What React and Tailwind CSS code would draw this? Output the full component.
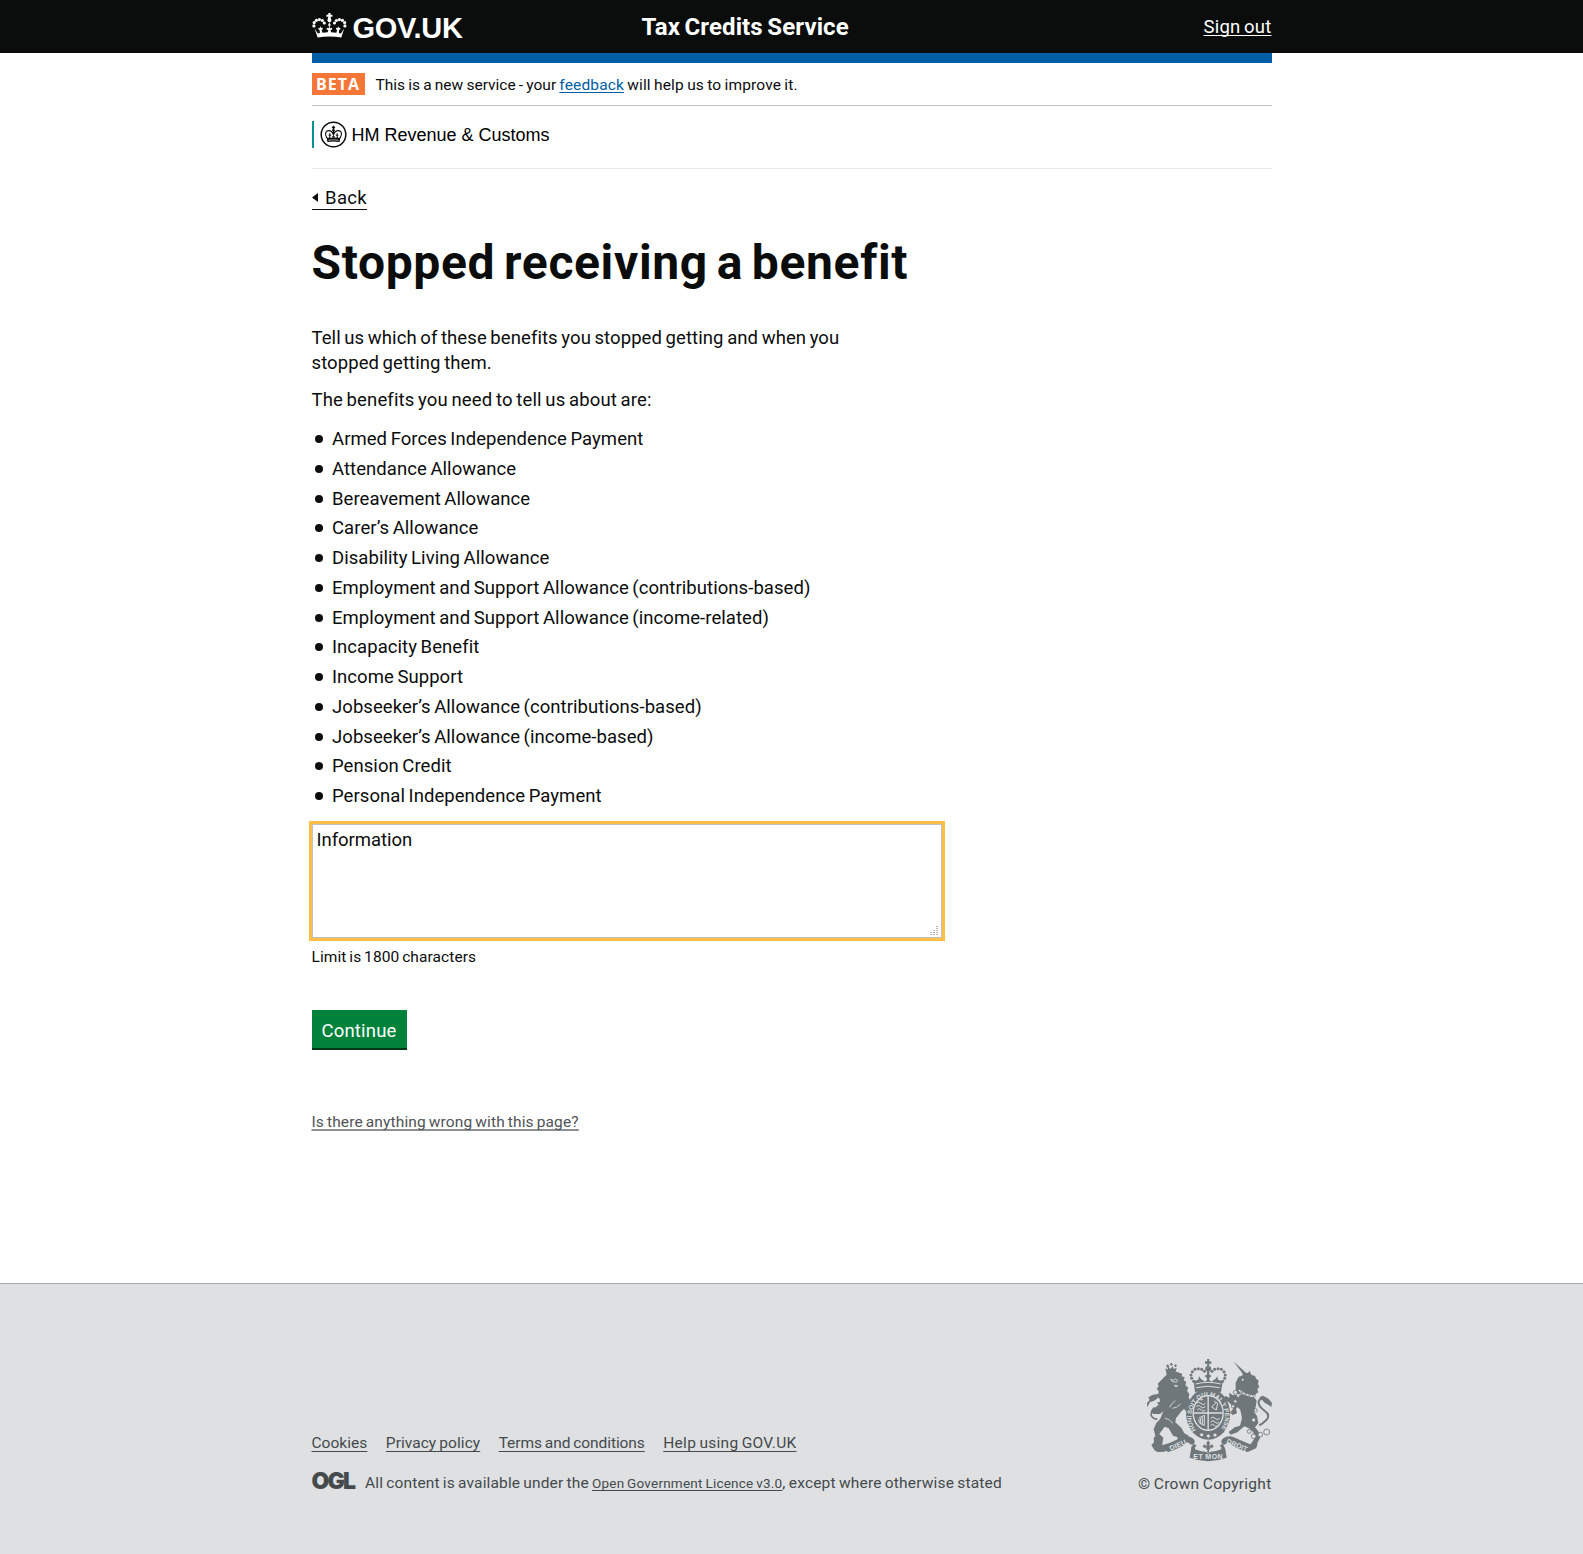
const benefits = [
  "Armed Forces Independence Payment",
  "Attendance Allowance",
  "Bereavement Allowance",
  "Carer’s Allowance",
  "Disability Living Allowance",
  "Employment and Support Allowance (contributions-based)",
  "Employment and Support Allowance (income-related)",
  "Incapacity Benefit",
  "Income Support",
  "Jobseeker’s Allowance (contributions-based)",
  "Jobseeker’s Allowance (income-based)",
  "Pension Credit",
  "Personal Independence Payment",
];

const linkBase = "underline decoration-1 [text-decoration-skip-ink:none]";

function GovCrown() {
  const pearls = [[1.9, 13.9], [2.2, 10.6], [4.4, 8.3], [7.4, 7.6], [10.4, 8.5], [12.3, 11]];
  return (
    <svg viewBox="0 0 35 27" className="h-[27px] w-[35px]" fill="#fff">
      {pearls.map(([x, y]) => (
        <g key={`${x}-${y}`}>
          <circle cx={x} cy={y} r="1.6" />
          <circle cx={34.8 - x} cy={y} r="1.6" />
        </g>
      ))}
      <path d="M16.3 1h2.2v1.700h1.900v2.100h-1.900l.6 2.400a2 2 0 1 1-3.400 0l.6-2.400h-1.900V2.700h1.900z" />
      <path d="M17.400 10.500l1.300 2.500-1.300 2.300-1.300-2.300z" />
      <path d="M2.600 16.400l3.300 5.100 2-.6-.3-3.200-1.200-.2.200-1.800 1.300.3.500-1.800.9 1.800 1.300-.3.200 1.800-1.300.2 1 3 5.200-.5.6-2.200-1.700-.6.300-1.700 1.600.6.900-1.600.9 1.600 1.600-.6.300 1.700-1.700.6.600 2.200 5.200.5 1-3-1.300-.2.200-1.800 1.300.3.900-1.800.5 1.800 1.300-.3.200 1.800-1.200.2-.3 3.200 2 .6 3.300-5.100-2.900 9.200q-11.800-2.300-23.700 0z" />
    </svg>
  );
}

function HmrcBadge() {
  return (
    <svg viewBox="0 0 27 27" className="h-[27px] w-[27px]">
      <circle cx="13.500" cy="13.500" r="12.300" fill="#fff" stroke="#0b0c0c" strokeWidth="1.500" />
      <g fill="none" stroke="#0b0c0c">
        <path d="M6.800 17C4.500 12.800 5.500 9.800 8.300 9.600c2.700-.1 4.500 1.500 5.200 4.200.7-2.700 2.500-4.300 5.200-4.200 2.800.2 3.800 3.200 1.500 7.400" strokeWidth="1.100" />
        <path d="M13.500 4.800v8.500M11.900 6.500h3.200" strokeWidth="1.300" />
        <path d="M9.800 17.200v-5M17.200 17.200v-5M8.600 14.200h2.600M15.800 14.200h2.600M12.200 15.700h2.600" strokeWidth="1" />
      </g>
      <circle cx="13.500" cy="9.300" r="1.200" fill="#0b0c0c" />
      <path d="M6.500 16q1.300 1.500 3 .2 2 1.300 4-.2 2 1.500 4 .2 1.700 1.300 3-.2l-.9 5q-6.100-1.200-12.200 0z" fill="#0b0c0c" />
      <path d="M8.300 19.300q5.200-1.100 10.400 0" stroke="#fff" strokeWidth=".6" fill="none" />
    </svg>
  );
}

function RoyalArms() {
  const light = "#dee0e2";
  const arch = [[191, 124], [185, 115], [183, 105], [187, 95], [195, 88], [205, 86], [215, 88], [223, 94]];
  return (
    <svg viewBox="51 54 375 312" className="-mt-px h-[104px] w-[125px] overflow-visible" fill="#6f777b">
      {/* lion */}
      <path d="M106 84l6 5 3-9 7 7 5-8 5 8 8-4-3 12-5 9-22 1zM113 84l-5-6 5-5 5 5zM124 78l-5-5 5-5 5 5zM136 82l-4-5 5-5 4 5z" />
      <path d="M102 112l10-9 28-8 17 7-2 7 9 3-3 8 8 7-3 8 9 9-4 8 7 10-2 10 5 11-4 8 8 6 5-4-2 13 5 5-10 7-7 11-8-3 2-10-8-9-9 8-15 20-2 12 18 16 9 17 11 6 7 12-11 6-28-3 1-9-14-5-13-22-12-5-16 22 12 11-4 25 14 9-6 8-22 1-9-6-9-15 8-8-1-12 5-8-5-20 8-18 11-11 10-24-10 8-20 0-8-8 8-12 10 2 8-8-8-8 10-3-1-9-9-6 5-8 1-9-6-6 6-8-3-8z" />
      <path d="M82 238c-24-4-23-21-7-32 19-13 27-24 19-37-7-8-21-3-29 9" fill="none" stroke="#6f777b" strokeWidth="5" />
      <path d="M52 202l-1-13 8-9-4-8 14-8 19-2-7 14-10 7-11 3z" />
      <path d="M122 118l7 3 7-4 7 4-4 6-5-2-5 2zM133 136l10 1-5 4zM136 182q-13 8-17 20M127 205q14 0 25-14M104 234q15 3 25 16" fill="none" stroke={light} strokeWidth="2.500" />
      {/* unicorn */}
      <path d="M310 64l41 37-8 6z" />
      <path d="M317 128l9-18 10-3 5-9 13 1 4-7 6 12 11 4 4 9 7 4-2 10 4 10-6 6 3 10-8 5-1 9-35-4-9-7-8 4-7-12z" />
      <path d="M298 158l10 7 12 0 5 8 5-10 43 9 7 10-3 19-5 15 9 12 4 21-10 13 11 13 4 20-7 12-3 15-12 3-6-12 10-15-2-22-13-11-14-6-21 18-20 7-6-8 18-14 16-5 6-22-5-25-8-9-5 6 3 13-13 5-8-8 8-8 2-9-15-15-7-1-8-11 8-5 10 6z" />
      <circle cx="338" cy="119" r="3" fill={light} />
      <path d="M388 256c19-12 34-24 23-37-13-12-28-20-25-34 3-12 19-16 28-3" fill="none" stroke="#6f777b" strokeWidth="6" />
      <path d="M388 172l11-5 17 10 10 12-2 12-9-7-10-5z" />
      <path d="M327 150q19 17 48 19" fill="none" stroke={light} strokeWidth="6" />
      <path d="M328 148l10 11 2-9 8 14 4-8 7 13 5-8 8 10" fill="none" stroke="#6f777b" strokeWidth="2.500" />
      <g fill={light} stroke="#6f777b" strokeWidth="2.500">
        <circle cx="316" cy="157" r="6" /><circle cx="316" cy="184" r="5" /><circle cx="309" cy="199" r="5" />
        <circle cx="377" cy="211" r="5" /><circle cx="371" cy="240" r="6" /><circle cx="358" cy="274" r="6" />
        <circle cx="371" cy="289" r="7" /><circle cx="391" cy="284" r="7" /><circle cx="410" cy="276" r="9" />
      </g>
      {/* ribbon */}
      <path d="M88 318q35-9 65-25 20-9 34 1 11 8 5 17-6 7-15-1l-5-4q-15 17-57 30l-25-11z" />
      <path d="M379 318q-32-9-64-25-20-9-34 1-11 8-5 17 6 7 15-1l5-4q14 17 57 30l25-11z" />
      <path d="M183 329q-1-10 9-17l8 4q-8 6-5 12 39 17 79 0 2-6-5-12l8-4q8 7 9 16l4 25q-56 21-111 0z" />
      {/* crown */}
      <path d="M231 57h7l-1 7h7v7h-7l1 7h-7l1-7h-7v-7h7zM228 79h13l3 7-3 7h-13l-3-7zM231 93h7v37h-7zM224 108l10-7 11 7-11 9z" />
      {arch.map(([x, y]) => (
        <g key={x * 1000 + y}>
          <circle cx={x} cy={y} r="4.500" />
          <circle cx={469 - x} cy={y} r="4.500" />
        </g>
      ))}
      <path d="M191 124l14-5 2-10 6 8 12 8 9-8 10 8 12-8 6-8 2 10 14 5-5 33q-39-11-78 0z" />
      <path d="M197 132q37-10 75 0M199 143q35-9 70 0" fill="none" stroke={light} strokeWidth="3" />
      {/* garter and shield */}
      <ellipse cx="234.500" cy="222" rx="66" ry="77" />
      <ellipse cx="234.500" cy="219" rx="47" ry="54" fill={light} />
      <ellipse cx="234.500" cy="219" rx="43" ry="50" />
      <path d="M234.500 169v102M192 219h85" stroke={light} strokeWidth="4" />
      <path d="M200 190q7-8 13 0t13 0M199 200q7-8 13 0t14 0M202 210q7-8 12 0t12 0M242 235q7-8 13 0t14 0M242 246q7-8 13 0t12 0M242 256q6-7 11 0t8 0M213 181l6-3M252 183l11 7-4 20-14-9 15-15M206 234l17-8v30M206 238q1 15 17 18M211 234v18M217 231v22" fill="none" stroke={light} strokeWidth="3" />
      <defs>
        <path id="garter" d="M198 270A50 60 0 1 1 274 266" />
      </defs>
      <text fill={light} fontFamily="Liberation Sans" fontWeight="700" fontSize="19">
        <textPath href="#garter" textLength="256" lengthAdjust="spacingAndGlyphs">HONI SOIT QUI MAL Y PENSE</textPath>
      </text>
      <path d="M209 284l6-5 6 5-6 6zM229 288l6-5 6 5-6 6zM249 285l6-5 6 5-6 6z" fill={light} />
      <path d="M234.500 299l6 10-2 8 8-5 5 7-5 6-6-2 1 4-4 3 1 7-4 3-4-3 1-7-4-3 1-4-6 2-5-6 5-7 8 5-2-8z" stroke={light} strokeWidth="1.500" />
      <g fill={light} fontFamily="Liberation Sans" fontWeight="700" fontSize="21">
        <text x="0" y="0" textLength="52" transform="translate(122 332) rotate(-23)">DIEU</text>
        <text x="190" y="357" textLength="88">ET MON</text>
        <text x="0" y="0" textLength="66" transform="translate(288 309) rotate(23)">DROIT</text>
      </g>
    </svg>
  );
}

function Header() {
  return (
    <header className="h-[53px] bg-[#0b0c0c] text-white">
      <div className="mx-auto flex h-full w-[960px] items-start">
        <div className="flex w-[330px] pt-3">
          <GovCrown />
          <span className="ml-[6px] font-['Liberation_Sans',sans-serif] text-[29px] leading-[32px] font-bold tracking-[-0.25px]">GOV.UK</span>
        </div>
        <span className="pt-[11px] text-[24px] leading-[32px] font-bold tracking-[0.1px] [word-spacing:-1.5px]">Tax Credits Service</span>
        <a href="#" className={`${linkBase} ml-auto pt-[15px] text-[18.5px] leading-[25px] tracking-[0.2px] [word-spacing:-1.1px] underline-offset-[2px]`}>Sign out</a>
      </div>
    </header>
  );
}

function Footer() {
  const link = `${linkBase} underline-offset-[3px]`;
  return (
    <footer className="mt-[151px] h-[271px] border-t border-[#a1acb2] bg-[#dee0e2] text-[15.5px] leading-[20px] text-[#454a4c] [word-spacing:-0.8px]">
      <div className="mx-auto flex w-[960px] items-end justify-between pt-[75px]">
        <div className="pb-px">
          <nav className="flex gap-[18.5px]">
            <a href="#" className={`${link} tracking-[0.03px]`}>Cookies</a>
            <a href="#" className={`${link} tracking-[0.05px]`}>Privacy policy</a>
            <a href="#" className={`${link} tracking-[-0.08px]`}>Terms and conditions</a>
            <a href="#" className={`${link} tracking-[0.28px]`}>Help using GOV.UK</a>
          </nav>
          <div className="mt-5 flex">
            <span className="w-[53.500px] font-[Inter,sans-serif] text-[23px] leading-[16px] font-black tracking-[-1.800px]">OGL</span>
            <p className="whitespace-nowrap">
              <span className="tracking-[0.14px]">All content is available under the </span>
              <a href="#" className={`${linkBase} text-[13.5px] tracking-[0.22px] underline-offset-[2px]`}>Open Government Licence v3.0</a>
              <span className="tracking-[0.18px]">, except where otherwise stated</span>
            </p>
          </div>
        </div>
        <div className="flex flex-col items-end">
          <RoyalArms />
          <span className="mt-3 tracking-[0.28px]">© Crown Copyright</span>
        </div>
      </div>
    </footer>
  );
}

export default function App() {
  return (
    <div className="min-h-screen bg-white font-[Roboto,sans-serif] text-[#0b0c0c]">
      <Header />
      <main className="mx-auto w-[960px] [word-spacing:-1.1px]">
        <div className="h-[10px] bg-[#005ea5]" />
        <div className="flex h-[43px] items-start border-b border-[#bfc1c3] pt-[10px]">
          <strong className="h-[22px] w-[53px] bg-[#f47738] text-center font-['Open_Sans',sans-serif] text-[16px] leading-[23px] font-bold tracking-[1px] text-white">BETA</strong>
          <p className="ml-[11px] text-[15.5px] leading-[24px] tracking-[0.14px] [word-spacing:-0.7px]">
            <span className="tracking-[0.01px]">This is a new service - your </span>
            <a href="#" className={`${linkBase} text-[#005ea5] underline-offset-[2px]`}>feedback</a>{" "}
            will help us to improve it.
          </p>
        </div>
        <div className="flex h-[63px] items-start border-b border-[#ebebeb] pt-[15px]">
          <div className="flex h-[27px] items-center border-l-2 border-[#009390] pl-[6px]">
            <HmrcBadge />
            <span className="ml-[5px] font-['Liberation_Sans',sans-serif] text-[18px] leading-[27px] pt-[2px] text-black [word-spacing:0]">HM Revenue &amp; Customs</span>
          </div>
        </div>

        <a href="#" className="mt-[17px] flex h-[24px] w-[55.500px] items-start border-b border-[#0b0c0c] text-[18.5px] leading-[24px]">
          <svg viewBox="0 0 6 9" className="mt-[7px] h-[9px] w-[6px] shrink-0" fill="#0b0c0c"><path d="M0 4.500L6 0v9z" /></svg>
          <span className="ml-[7.500px] tracking-[0.35px]">Back</span>
        </a>

        <h1 className="mt-[28px] text-[48px] leading-[50px] font-bold tracking-[0.65px] [word-spacing:-3.800px]">Stopped receiving a benefit</h1>
        <p className="mt-[38px] text-[18.5px] leading-[25px] tracking-[0.08px]">
          Tell us which of these benefits you stopped getting and when you<br />stopped getting them.
        </p>
        <p className="mt-3 text-[18.5px] leading-[25px] tracking-[0.14px]">The benefits you need to tell us about are:</p>

        <ul className="mt-[14px] text-[18.5px] leading-[25px] tracking-[0.06px]">
          {benefits.map((benefit) => (
            <li key={benefit} className="flex h-[29.750px] items-start">
              <span className="mt-[8px] mr-[9.500px] ml-[3px] size-[8px] rounded-full bg-[#0b0c0c]" />
              {benefit}
            </li>
          ))}
        </ul>

        <div className="relative mt-[10.250px] h-[114px] w-[630px]">
          <textarea
            defaultValue="Information"
            className="block h-full w-full resize-none border border-[#bfc1c3] bg-white px-[4px] py-[3px] text-[18.5px] leading-[25px] tracking-[-0.05px] outline-3 outline-[#ffbf47]"
          />
          <svg viewBox="0 0 8 9" className="absolute right-[3.500px] bottom-[3px] h-[9px] w-[8px]" stroke="#b4b4b4" strokeWidth="2" strokeDasharray="1 1">
            <path d="M1 9V6M4 9V3M7 9V0" />
          </svg>
        </div>
        <p className="mt-[9px] text-[15.5px] leading-[20px] tracking-[0.09px]">Limit is 1800 characters</p>
        <button type="button" className="mt-[43px] block h-[40px] w-[95px] border-b-2 border-[#003618] bg-[#00823b] pt-[4px] text-[18.5px] leading-[34px] tracking-[0.2px] text-white">
          Continue
        </button>
        <a href="#" className="mt-[62px] block w-fit text-[15.5px] leading-[20px] tracking-[0.15px] text-[#505356] underline decoration-[#8d9093] decoration-2 underline-offset-[2px] [text-decoration-skip-ink:none]">
          Is there anything wrong with this page?
        </a>
      </main>
      <Footer />
    </div>
  );
}
